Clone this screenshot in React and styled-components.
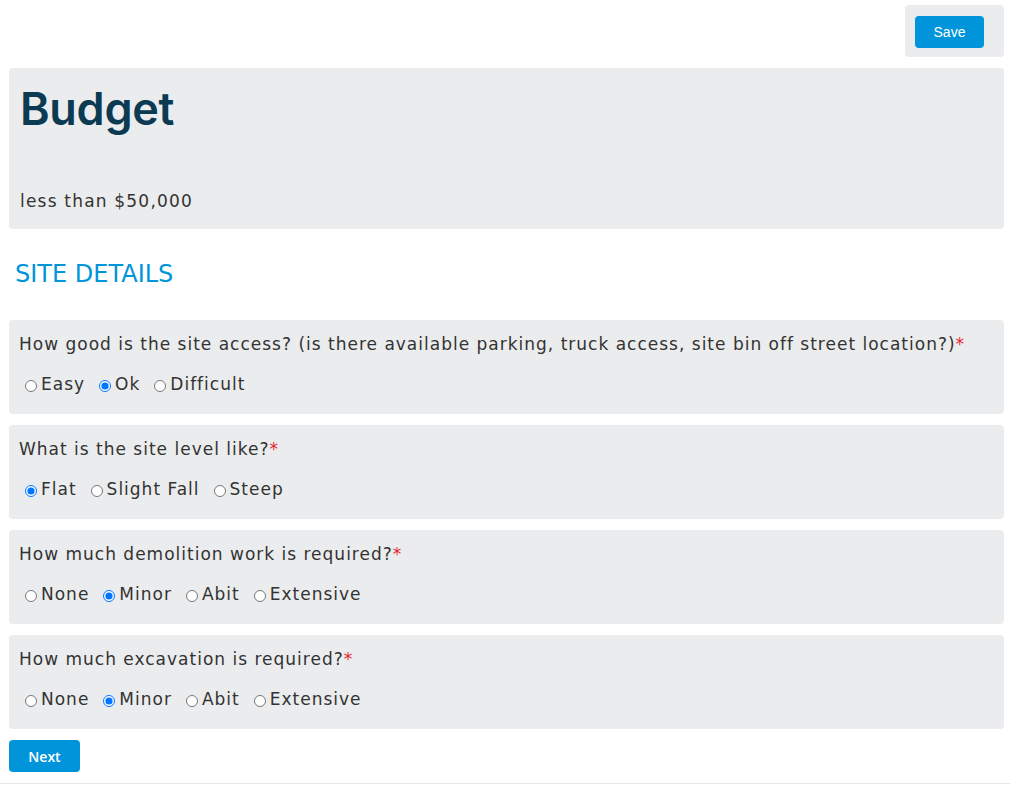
import React from "react";
import styled, { createGlobalStyle } from "styled-components";

const Global = createGlobalStyle`
  html, body { margin: 0; padding: 0; background: #fff; }
  body { font-family: "DejaVu Sans", sans-serif; color: #333; }
`;

const Page = styled.div`
  padding: 5px 6px 11px 9px;
  border-bottom: 1px solid #e6e6e6;
  width: 995px;
`;

const TopBar = styled.div`
  display: flex;
  justify-content: flex-end;
`;

const SavePanel = styled.div`
  background: #ebeced;
  border-radius: 4px;
  padding: 11px 20px 9px 10px;
`;

const BlueButton = styled.button`
  background: #0095da;
  color: #fff;
  border: none;
  border-radius: 4px;
  height: 32px;
  cursor: pointer;
  font-family: ${(p) => (p.$alt ? '"Open Sans", sans-serif' : '"Liberation Sans", Arial, sans-serif')};
  font-size: 14px;
  font-weight: ${(p) => (p.$alt ? 600 : 400)};
  padding: 0;
  width: ${(p) => p.$w}px;
  display: block;
`;

const Panel = styled.div`
  background: #ebeced;
  border-radius: 4px;
  padding: ${(p) => p.$pad};
  margin-top: ${(p) => p.$mt || 0}px;
`;

const Title = styled.h1`
  margin: 0;
  font-family: "Inter", sans-serif;
  font-weight: 600;
  font-size: 45px;
  letter-spacing: -0.3px;
  color: #0b3a53;
  line-height: 54px;
`;

const Budget = styled.div`
  margin-top: 54px;
  font-size: 17px;
  letter-spacing: 1.2px;
  line-height: 22px;
  color: #333;
`;

const Section = styled.h2`
  margin: 30px 0 31px 6px;
  font-family: "DejaVu Sans", sans-serif;
  font-weight: 400;
  font-size: 24px;
  line-height: 30px;
  color: #0095da;
`;

const Question = styled.div`
  font-size: 17px;
  letter-spacing: 1px;
  line-height: 26px;
  color: #333;
`;

const Req = styled.span`
  color: #e8262d;
`;

const Options = styled.div`
  display: flex;
  align-items: center;
  margin-top: 15px;
`;

const Opt = styled.label`
  display: flex;
  align-items: center;
  font-size: 17px;
  letter-spacing: 1px;
  line-height: 24px;
  color: #333;
  margin-right: 8px;
  input {
    margin: 4px 4px 0 6px;
    width: 12px;
    height: 12px;
    accent-color: #0075ff;
  }
`;

const Footer = styled.div`
  margin-top: 11px;
`;

const questions = [
  {
    q: "How good is the site access? (is there available parking, truck access, site bin off street location?)",
    opts: ["Easy", "Ok", "Difficult"],
    sel: 1,
  },
  { q: "What is the site level like?", opts: ["Flat", "Slight Fall", "Steep"], sel: 0 },
  { q: "How much demolition work is required?", opts: ["None", "Minor", "Abit", "Extensive"], sel: 1 },
  { q: "How much excavation is required?", opts: ["None", "Minor", "Abit", "Extensive"], sel: 1 },
];

export default function App() {
  return (
    <>
      <Global />
      <Page>
        <TopBar>
          <SavePanel>
            <BlueButton $w={69}>Save</BlueButton>
          </SavePanel>
        </TopBar>
        <Panel $pad="14px 10px 17px 11px" $mt={11}>
          <Title>Budget</Title>
          <Budget>less than $50,000</Budget>
        </Panel>
        <Section>SITE DETAILS</Section>
        {questions.map((item, i) => (
          <Panel key={i} $pad="11px 10px 18px 10px" $mt={i === 0 ? 0 : 11}>
            <Question>
              {item.q}
              <Req>*</Req>
            </Question>
            <Options>
              {item.opts.map((o, j) => (
                <Opt key={o}>
                  <input type="radio" name={"q" + i} defaultChecked={j === item.sel} />
                  {o}
                </Opt>
              ))}
            </Options>
          </Panel>
        ))}
        <Footer>
          <BlueButton $w={71} $alt>Next</BlueButton>
        </Footer>
      </Page>
    </>
  );
}
